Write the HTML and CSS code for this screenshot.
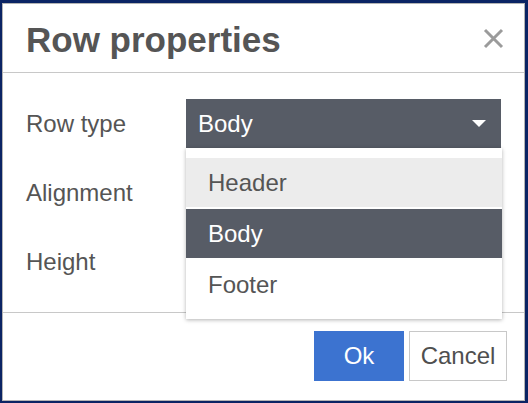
FILE: index.html
```html
<!DOCTYPE html>
<html>
<head>
<meta charset="utf-8">
<link rel="stylesheet" href="styles.css">
</head>
<body>
<div class="dialog">
  <div class="dlg-header">
    <h1 class="title">Row properties</h1>
    <button class="close" aria-label="Close">
      <svg width="21" height="21" viewBox="0 0 21 21"><path d="M2 2 L19 19 M19 2 L2 19" stroke="#9b9b9b" stroke-width="3" fill="none"/></svg>
    </button>
  </div>
  <div class="dlg-body">
    <div class="label">Row type</div>
    <div class="control">
      <div class="select">
        <span>Body</span>
        <svg class="caret" width="14" height="7" viewBox="0 0 14 7"><path d="M0 0 L14 0 L7 7 Z" fill="#fff"/></svg>
      </div>
      <ul class="menu">
        <li class="item hover">Header</li>
        <li class="item selected">Body</li>
        <li class="item">Footer</li>
      </ul>
    </div>
    <div class="label">Alignment</div>
    <div class="control"></div>
    <div class="label">Height</div>
    <div class="control"></div>
  </div>
  <div class="dlg-footer">
    <button class="btn primary">Ok</button>
    <button class="btn">Cancel</button>
  </div>
</div>
</body>
</html>
```
FILE: styles.css
```css
html, body {
  margin: 0;
  padding: 0;
}
body {
  background: #0b2464;
  width: 528px;
  height: 403px;
  overflow: hidden;
  font-family: "Liberation Sans", Arial, sans-serif;
  color: #555;
}
.dialog {
  margin: 3px 3px 2px 2px;
  width: 521px;
  height: 396px;
  border: 1px solid #b4b4b4;
  background: #fff;
  display: flex;
  flex-direction: column;
}
.dlg-header {
  height: 68px;
  box-sizing: content-box;
  padding: 0 20px 0 23px;
  border-bottom: 1px solid #c8c8c8;
  display: flex;
  align-items: flex-start;
  justify-content: space-between;
}
.title {
  margin: 16px 0 0 0;
  font-size: 35px;
  line-height: 40px;
  font-weight: bold;
  color: #555;
}
.close {
  margin-top: 24px;
  border: 0;
  background: none;
  padding: 0;
  width: 21px;
  height: 21px;
  display: block;
}
.close svg { display: block; }
.dlg-body {
  height: 240px;
  box-sizing: border-box;
  padding: 26px 23px 27px 23px;
  border-bottom: 1px solid #c8c8c8;
  display: grid;
  grid-template-columns: 160px 1fr;
  grid-auto-rows: 49px;
  row-gap: 20px;
}
.label {
  font-size: 24px;
  line-height: 49px;
  color: #555;
}
.control {
  position: relative;
}
.select {
  height: 49px;
  background: #575c66;
  color: #fff;
  font-size: 24px;
  line-height: 49px;
  padding: 0 15px 0 12px;
  display: flex;
  align-items: center;
  justify-content: space-between;
}
.caret { display: block; }
.menu {
  position: absolute;
  top: 49px;
  left: 0;
  width: 316px;
  margin: 0;
  padding: 10px 0;
  list-style: none;
  background: #fff;
  box-shadow: 0 1px 4px rgba(0, 0, 0, 0.3);
  z-index: 5;
}
.item {
  height: 49px;
  line-height: 49px;
  margin-bottom: 2px;
  padding-left: 22px;
  font-size: 24px;
  color: #555;
}
.item:last-child { margin-bottom: 0; }
.item.hover { background: #ececec; }
.item.selected { background: #575c66; color: #fff; }
.dlg-footer {
  flex: 1;
  display: flex;
  justify-content: flex-end;
  align-items: flex-start;
  gap: 5px;
  padding: 18px 17px 0 0;
}
.btn {
  height: 50px;
  font-family: inherit;
  font-size: 24px;
  border: 1px solid #c8c8c8;
  background: #fff;
  color: #4f4f4f;
  padding: 0 10px;
  min-width: 98px;
}
.btn.primary {
  background: #3c73d0;
  border-color: #3c73d0;
  color: #fff;
  min-width: 90px;
  width: 90px;
}
```
